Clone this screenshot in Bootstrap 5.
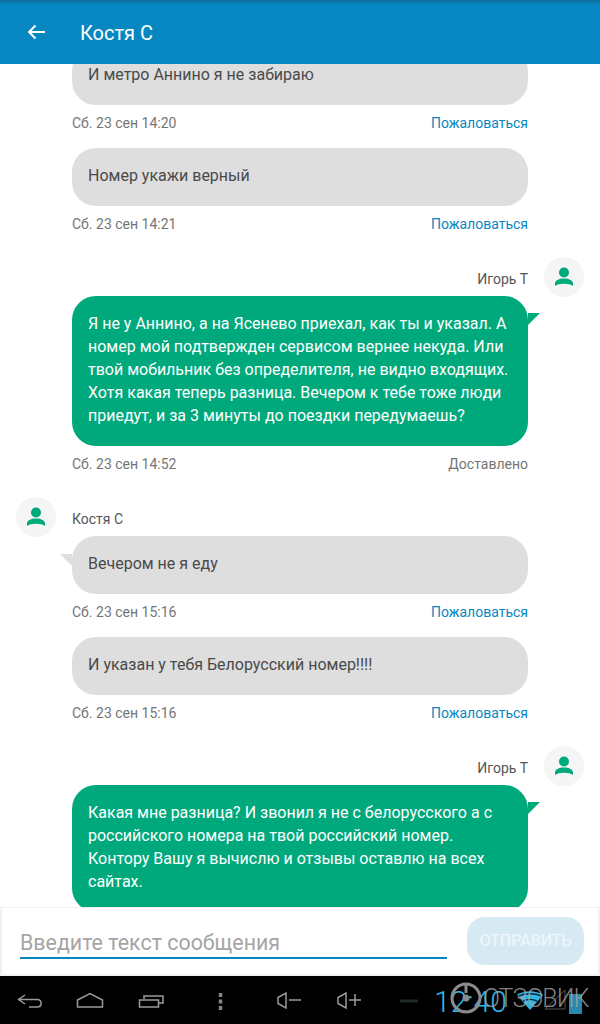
<!DOCTYPE html>
<html lang="ru">
<head>
  <meta charset="UTF-8">
  <title>Костя С</title>
  <link href="https://cdn.jsdelivr.net/npm/bootstrap@5.3.3/dist/css/bootstrap.min.css" rel="stylesheet">
  <style>
    html, body {
      height: 1024px;
      overflow: hidden;
    }
    body {
      font-family: Roboto, "Liberation Sans", sans-serif;
      background-color: #fff;
      color: #444;
    }
    #app {
      height: 1024px;
    }
    #top-bar {
      height: 64px;
      padding-left: 27px;
      background: linear-gradient(#0b6c9b 0, #0787c1 5px, #0787c1 100%);
      color: #fff;
      font-size: 20px;
      z-index: 2;
    }
    #top-bar svg {
      margin-right: 35px;
    }
    #top-bar span {
      padding-top: 2px;
    }
    #thread {
      min-height: 0;
      padding: 0 16px;
    }
    #thread-inner {
      margin-top: -17px;
    }
    .bubble {
      margin: 0 56px;
      padding: 16px 16px 19px;
      border-radius: 24px;
      font-size: 16px;
      line-height: 23px;
      position: relative;
    }
    .bubble-in {
      background-color: #dedede;
      color: #4a4a4a;
    }
    .bubble-out {
      background-color: #00a97b;
      color: #fff;
    }
    .tail {
      position: absolute;
      top: 17px;
      width: 12px;
      height: 12px;
    }
    .bubble-in .tail {
      left: -12px;
      top: 18px;
      background-color: #dedede;
      clip-path: polygon(0 0, 100% 0, 100% 100%);
    }
    .bubble-out .tail {
      right: -12px;
      background-color: #00a97b;
      clip-path: polygon(0 0, 100% 0, 0 100%);
    }
    .meta-row {
      margin: 9px 56px 16px;
      font-size: 14px;
      line-height: 18px;
      color: #757575;
    }
    .report {
      color: #0787c1;
    }
    .sender-row {
      height: 40px;
      margin-top: 24px;
      margin-bottom: -1px;
      font-size: 14px;
      color: #555;
    }
    .sender-row span {
      padding-top: 5px;
    }
    .avatar-dot {
      width: 40px;
      height: 40px;
      background-color: #f5f5f5;
    }
    .sender-in,
    .sender-out {
      gap: 16px;
    }
    #composer {
      height: 69px;
      padding: 9px 14px 0 18px;
      border: 2px solid #f1f1f1;
      border-width: 1px 2px 2px 2px;
      background-color: #fff;
      z-index: 2;
    }
    #msg-input {
      height: 36px;
      margin-top: 6px;
      padding: 4px 0 0;
      border: 0;
      border-bottom: 2px solid #0787c1;
      border-radius: 0;
      font-size: 21.4px;
      background: transparent;
      box-shadow: none;
      color: #444;
    }
    #msg-input::placeholder {
      color: #a5a5a5;
    }
    #send-btn {
      width: 117px;
      height: 48px;
      margin-left: 20px;
      padding: 0;
      border: 0;
      border-radius: 18px;
      background-color: #d7eaf4;
      color: #f1f8fb;
      font-size: 16px;
    }
    #sys-bar {
      height: 48px;
      background-color: #000;
    }
    .nav-icon {
      position: absolute;
      top: 0;
      left: 0;
    }
    #clock {
      position: absolute;
      left: 434px;
      top: 0;
      font-size: 30px;
      font-weight: 300;
      line-height: 52px;
      color: #33b5e5;
    }
    #watermark {
      position: absolute;
      left: 483px;
      top: 0;
      font-size: 25px;
      font-weight: 300;
      line-height: 46px;
      letter-spacing: -1px;
      color: rgba(165, 165, 165, .8);
    }
  </style>
</head>
<body>
  <div id="app" class="d-flex flex-column">
    <div id="top-bar" class="d-flex align-items-center flex-shrink-0">
      <svg width="18" height="16" viewBox="0 0 18 16" fill="none" stroke="#fff" stroke-width="2"><path d="M18 8H2M8.500 1.500 2 8l6.500 6.500"/></svg>
      <span>Костя С</span>
    </div>

    <div id="thread" class="flex-grow-1 overflow-hidden">
      <div id="thread-inner">
        <div class="bubble bubble-in">И метро Аннино я не забираю</div>
        <div class="meta-row d-flex justify-content-between"><span>Сб. 23 сен 14:20</span><span class="report">Пожаловаться</span></div>

        <div class="bubble bubble-in">Номер укажи верный</div>
        <div class="meta-row d-flex justify-content-between"><span>Сб. 23 сен 14:21</span><span class="report">Пожаловаться</span></div>

        <div class="sender-row sender-out d-flex align-items-center justify-content-end">
          <span>Игорь Т</span>
          <div class="avatar-dot rounded-circle d-flex align-items-center justify-content-center">
            <svg width="20" height="20" viewBox="0 0 20 20" fill="#00a97b"><circle cx="10" cy="5.500" r="5"/><path d="M1 19v-2.500C1 13.500 5 11.500 10 11.500s9 2 9 5V19c-2-1.500-5-2.300-9-2.300S3 17.500 1 19z"/></svg>
          </div>
        </div>
        <div class="bubble bubble-out">
          <div class="tail"></div>
          Я не у Аннино, а на Ясенево приехал, как ты и указал. А номер мой подтвержден сервисом вернее некуда. Или твой мобильник без определителя, не видно входящих. Хотя какая теперь разница. Вечером к тебе тоже люди приедут, и за 3 минуты до поездки передумаешь?
        </div>
        <div class="meta-row d-flex justify-content-between"><span>Сб. 23 сен 14:52</span><span>Доставлено</span></div>

        <div class="sender-row sender-in d-flex align-items-center">
          <div class="avatar-dot rounded-circle d-flex align-items-center justify-content-center">
            <svg width="20" height="20" viewBox="0 0 20 20" fill="#00a97b"><circle cx="10" cy="5.500" r="5"/><path d="M1 19v-2.500C1 13.500 5 11.500 10 11.500s9 2 9 5V19c-2-1.500-5-2.300-9-2.300S3 17.500 1 19z"/></svg>
          </div>
          <span>Костя С</span>
        </div>
        <div class="bubble bubble-in">
          <div class="tail"></div>
          Вечером не я еду
        </div>
        <div class="meta-row d-flex justify-content-between"><span>Сб. 23 сен 15:16</span><span class="report">Пожаловаться</span></div>

        <div class="bubble bubble-in">И указан у тебя Белорусский номер!!!!</div>
        <div class="meta-row d-flex justify-content-between"><span>Сб. 23 сен 15:16</span><span class="report">Пожаловаться</span></div>

        <div class="sender-row sender-out d-flex align-items-center justify-content-end">
          <span>Игорь Т</span>
          <div class="avatar-dot rounded-circle d-flex align-items-center justify-content-center">
            <svg width="20" height="20" viewBox="0 0 20 20" fill="#00a97b"><circle cx="10" cy="5.500" r="5"/><path d="M1 19v-2.500C1 13.500 5 11.500 10 11.500s9 2 9 5V19c-2-1.500-5-2.300-9-2.300S3 17.500 1 19z"/></svg>
          </div>
        </div>
        <div class="bubble bubble-out">
          <div class="tail"></div>
          Какая мне разница? И звонил я не с белорусского а с российского номера на твой российский номер. Контору Вашу я вычислю и отзывы оставлю на всех сайтах.
        </div>
      </div>
    </div>

    <div id="composer" class="d-flex align-items-start flex-shrink-0">
      <input id="msg-input" type="text" class="form-control flex-grow-1" placeholder="Введите текст сообщения">
      <button id="send-btn" type="button" class="btn flex-shrink-0">ОТПРАВИТЬ</button>
    </div>

    <div id="sys-bar" class="position-relative flex-shrink-0">
      <svg class="nav-icon" width="420" height="48" viewBox="0 0 420 48" fill="none" stroke="#9a9a9a" stroke-width="1.500">
        <path d="M25 19l-6.500 4.500L25 28M18.500 23.500H37c5.500 0 5.500 7.500 0 7.500h-8"/>
        <path d="M77.500 24 90 17.500 102.500 24v7h-25z"/>
        <path d="M139.500 24h19v7h-19zM144 23v-3h19v7h-4"/>
        <path d="M220.500 17v4M220.500 23.500v4M220.500 30v4" stroke-width="3.500" stroke="#858585"/>
        <path d="M278 21.500v6l8 4.500V17zM289 24h12"/>
        <path d="M338 21.500v6l8 4.500V17zM349 24h12M355 18v12"/>
        <path d="M400 25h18" stroke="#1c2a2a" stroke-width="3"/>
      </svg>
      <div id="clock">12:40</div>
      <svg class="nav-icon" width="600" height="48" viewBox="0 0 600 48">
        <path d="M517 19 530 34 543 19c-7-5-19-5-26 0z" fill="#33b5e5"/>
        <path d="M519 20c6-3 16-3 22 0M523 25c4-2 10-2 14 0" fill="none" stroke="#0a2a35" stroke-width="1.500"/>
        <path d="M545 33 565 14v19z" fill="none" stroke="#555"/>
        <rect x="569" y="18" width="13" height="20" fill="#2a87ad"/>
        <circle cx="466" cy="22" r="14" fill="none" stroke="#8b8b8b" stroke-width="3"/>
        <path d="M466 7v10" stroke="#8b8b8b" stroke-width="3"/>
        <circle cx="466" cy="22" r="3.500" fill="#8b8b8b"/>
      </svg>
      <div id="watermark">ОТЗОВИК</div>
    </div>
  </div>
  <script src="https://cdn.jsdelivr.net/npm/bootstrap@5.3.3/dist/js/bootstrap.bundle.min.js"></script>
</body>
</html>
